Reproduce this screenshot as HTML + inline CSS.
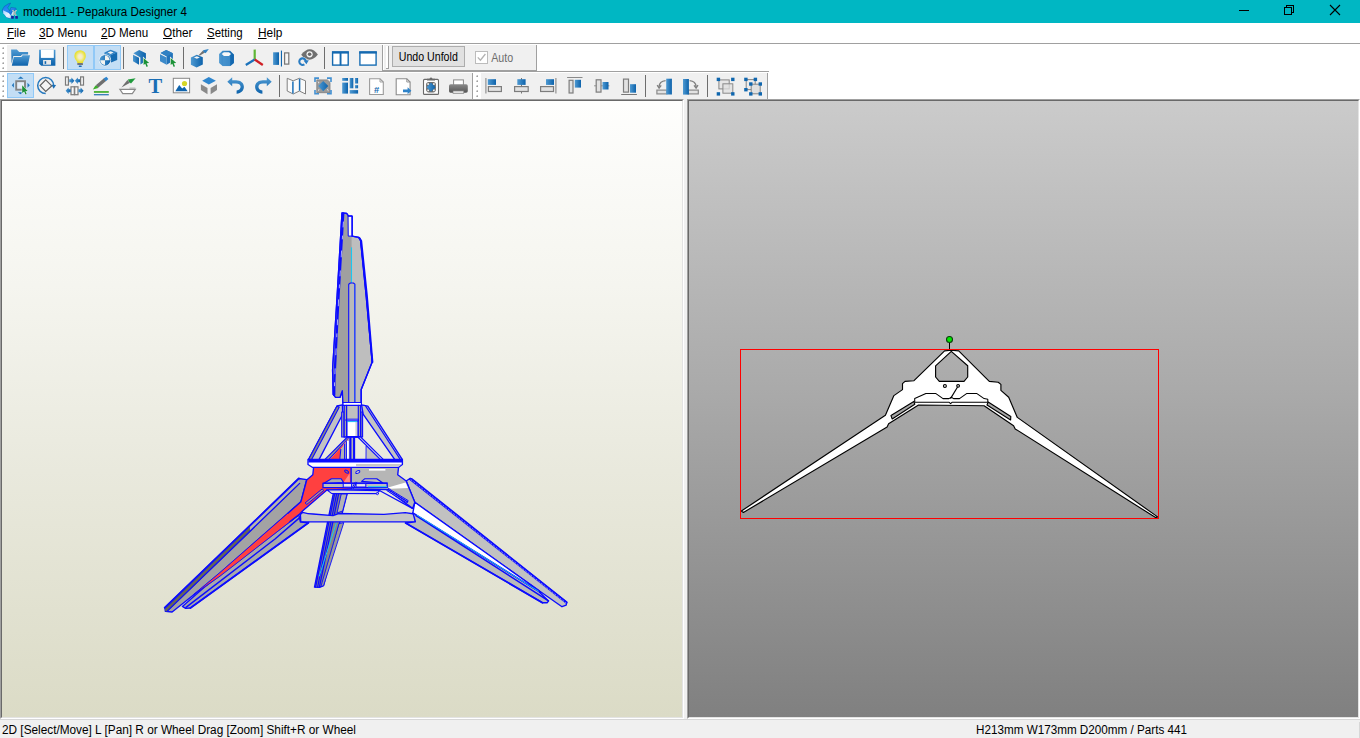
<!DOCTYPE html>
<html lang="en">
<head>
<meta charset="utf-8">
<title>model11 - Pepakura Designer 4</title>
<style>
*{box-sizing:border-box;margin:0;padding:0}
html,body{width:1360px;height:738px;overflow:hidden;background:#f0f0f0}
body{position:relative;font-family:"Liberation Sans",sans-serif;font-size:12px;color:#000}
.abs{position:absolute}
#title{left:0;top:0;width:1360px;height:23px;background:#00b7c3}
#title .t{position:absolute;left:23px;top:4px;font-size:12.3px;line-height:16px;white-space:nowrap;transform:scaleX(.935);transform-origin:0 50%}
#menu{left:0;top:23px;width:1360px;height:20px;background:#fff}
#menu span{position:absolute;top:2px;line-height:16px;font-size:12.3px;white-space:nowrap;transform:scaleX(.935);transform-origin:0 50%}
#menu u{text-decoration:underline;text-underline-offset:1px}
#mline1{left:0;top:43px;width:1360px;height:1px;background:#a0a0a0}
#mline2{left:0;top:44px;width:1360px;height:1px;background:#fff}
#tbarea{left:0;top:45px;width:1360px;height:54px;background:#fff}
.tb{position:absolute;background:#f0f0f0}
.sep{position:absolute;width:1px;background:#6b6b6b}
.sel{position:absolute;background:#c2dcf3;border:1px solid #90c8f6}
.grip{position:absolute;width:7px;background:#fff}
.grip i{position:absolute;left:3px;width:2px;height:2px;background:#b4b4b4}
#status{left:0;top:719px;width:1360px;height:19px;background:#f0f0f0;border-top:1px solid #d7d7d7}
#status span{position:absolute;top:2px;line-height:16px;font-size:12.3px;white-space:nowrap;transform:scaleX(.935);transform-origin:0 50%}
.pane{position:absolute;border-style:solid;border-width:1px;border-color:#a0a0a0 #fff #fff #a0a0a0}
.pane>.in{position:absolute;left:0;top:0;right:0;bottom:0;border-style:solid;border-width:1px;border-color:#696969 #e3e3e3 #e3e3e3 #696969;overflow:hidden}
#p3d .in{background:linear-gradient(#fefefd 0%,#f5f5ef 30%,#e9e9dd 60%,#dbdbc6 100%)}
#p2d .in{background:linear-gradient(#cbcbcb 0%,#a9a9a9 48%,#808080 100%)}
svg{position:absolute;left:0;top:0;overflow:visible}
</style>
</head>
<body>
<div id="title" class="abs"><span class="t" style="transform:scaleX(.9495)">model11 - Pepakura Designer 4</span>
<svg width="1360" height="23" viewBox="0 0 1360 23">
<defs><linearGradient id="aig" x1="0" y1="0" x2="0.4" y2="1"><stop offset="0" stop-color="#0a78f0"/><stop offset="0.5" stop-color="#2a8cf0"/><stop offset="1" stop-color="#0d5fd0"/></linearGradient>
<linearGradient id="aig2" x1="0" y1="0" x2="1" y2="1"><stop offset="0" stop-color="#9fd0ff"/><stop offset="0.6" stop-color="#e8f4ff"/><stop offset="1" stop-color="#bcd8f4"/></linearGradient></defs>
<path d="M10.7 3.1 L8.1 3.9 L4.2 6.5 L2.2 10.1 L3.3 13.2 L6.5 17.2 L10.7 18.7 L11.1 15.6 L12.4 10.9 L16.3 9.8 L15.9 8.1 L10.9 7.4 L9.8 10.9 L7.6 7.8 Z" fill="url(#aig)" stroke="#0a5ab0" stroke-width="0.5"/>
<path d="M3 10.2 L8.8 13 L10.9 15.4 L10.7 18.6 L6.5 17.2 L3.3 13.2 Z" fill="url(#aig2)"/>
<path d="M11 15.2 L12.6 11.4 L14 12.6 L12.6 15.6 Z" fill="#cfe3f6"/>
<path d="M12.6 10 L16.2 15.6 M16.4 10 L12.8 15.6" stroke="#d8d8d8" stroke-width="1.3"/>
<path d="M13.2 10.6 L15.8 15 M15.8 10.6 L13.4 15" stroke="#8a8a8a" stroke-width="0.5"/>
<rect x="11.2" y="15.9" width="2.6" height="2.8" rx="0.5" fill="#1a1c9c"/><rect x="15.3" y="15.9" width="2.6" height="2.8" rx="0.5" fill="#1a1c9c"/>
<g stroke="#000" stroke-width="1" fill="none" shape-rendering="crispEdges">
<path d="M1239 10.5 H1249"/>
<path d="M1284.5 7.5 H1291.5 V14.5 H1284.5 Z"/><path d="M1286.5 7.5 V5.5 H1293.5 V12.5 H1291.5"/>
</g>
<path d="M1330 5 L1340 15 M1340 5 L1330 15" stroke="#000" stroke-width="1.1" fill="none"/>
</svg></div>
<div id="menu" class="abs">
<span style="left:7px"><u>F</u>ile</span>
<span style="left:39px;transform:scaleX(0.962)"><u>3</u>D Menu</span>
<span style="left:101px;transform:scaleX(0.946)"><u>2</u>D Menu</span>
<span style="left:163px;transform:scaleX(0.955)"><u>O</u>ther</span>
<span style="left:207px;transform:scaleX(0.93)"><u>S</u>etting</span>
<span style="left:258px;transform:scaleX(0.964)"><u>H</u>elp</span>
</div>
<div id="mline1" class="abs"></div>
<div id="mline2" class="abs"></div>
<!--TB-START-->
<svg id="tbsvg" width="1360" height="100" viewBox="0 0 1360 100" shape-rendering="auto">
<defs>
<linearGradient id="bv" x1="0" y1="0" x2="0" y2="1"><stop offset="0" stop-color="#509bd3"/><stop offset="1" stop-color="#0c62ab"/></linearGradient>
<linearGradient id="bh" x1="0" y1="0" x2="1" y2="0"><stop offset="0" stop-color="#4f9ad2"/><stop offset="1" stop-color="#0c62ab"/></linearGradient>
<linearGradient id="gv" x1="0" y1="0" x2="0" y2="1"><stop offset="0" stop-color="#8a8a8a"/><stop offset="1" stop-color="#555"/></linearGradient>
<radialGradient id="bulb" cx="0.5" cy="0.5" r="0.5"><stop offset="0" stop-color="#f6ecd8"/><stop offset="0.35" stop-color="#f4ecc0"/><stop offset="0.8" stop-color="#ebe44a"/><stop offset="1" stop-color="#e6de2c"/></radialGradient>
</defs>
<!-- toolbar backgrounds -->
<rect x="0" y="45" width="1360" height="54" fill="#fff"/>
<rect x="7" y="45" width="375" height="26" fill="#f0f0f0"/>
<rect x="384" y="45" width="152" height="26" fill="#f0f0f0"/>
<rect x="0" y="71" width="769" height="1" fill="#a0a0a0"/>
<rect x="7" y="73" width="465" height="26" fill="#f0f0f0"/>
<rect x="481" y="73" width="286" height="26" fill="#f0f0f0"/>
<!-- toolbar end edges -->
<rect x="382" y="45" width="1" height="26" fill="#a0a0a0"/>
<rect x="536" y="45" width="1" height="26" fill="#a0a0a0"/>
<rect x="383" y="70" width="154" height="1" fill="#a0a0a0"/>
<rect x="472" y="73" width="1" height="26" fill="#a0a0a0"/>
<rect x="767" y="73" width="1" height="26" fill="#a0a0a0"/>
<!-- grips -->
<g fill="#c6c6c6">
<rect x="2" y="47" width="2" height="2" fill="#c2c2c2"/><rect x="2" y="47" width="1" height="1" fill="#e6e6e6"/><rect x="3" y="48" width="1" height="1" fill="#a0a0a0"/><rect x="2" y="52" width="2" height="2" fill="#c2c2c2"/><rect x="2" y="52" width="1" height="1" fill="#e6e6e6"/><rect x="3" y="53" width="1" height="1" fill="#a0a0a0"/><rect x="2" y="57" width="2" height="2" fill="#c2c2c2"/><rect x="2" y="57" width="1" height="1" fill="#e6e6e6"/><rect x="3" y="58" width="1" height="1" fill="#a0a0a0"/><rect x="2" y="62" width="2" height="2" fill="#c2c2c2"/><rect x="2" y="62" width="1" height="1" fill="#e6e6e6"/><rect x="3" y="63" width="1" height="1" fill="#a0a0a0"/><rect x="2" y="67" width="2" height="2" fill="#c2c2c2"/><rect x="2" y="67" width="1" height="1" fill="#e6e6e6"/><rect x="3" y="68" width="1" height="1" fill="#a0a0a0"/>
<rect x="2" y="75" width="2" height="2" fill="#c2c2c2"/><rect x="2" y="75" width="1" height="1" fill="#e6e6e6"/><rect x="3" y="76" width="1" height="1" fill="#a0a0a0"/><rect x="2" y="80" width="2" height="2" fill="#c2c2c2"/><rect x="2" y="80" width="1" height="1" fill="#e6e6e6"/><rect x="3" y="81" width="1" height="1" fill="#a0a0a0"/><rect x="2" y="85" width="2" height="2" fill="#c2c2c2"/><rect x="2" y="85" width="1" height="1" fill="#e6e6e6"/><rect x="3" y="86" width="1" height="1" fill="#a0a0a0"/><rect x="2" y="90" width="2" height="2" fill="#c2c2c2"/><rect x="2" y="90" width="1" height="1" fill="#e6e6e6"/><rect x="3" y="91" width="1" height="1" fill="#a0a0a0"/><rect x="2" y="95" width="2" height="2" fill="#c2c2c2"/><rect x="2" y="95" width="1" height="1" fill="#e6e6e6"/><rect x="3" y="96" width="1" height="1" fill="#a0a0a0"/>
<rect x="476" y="75" width="2" height="2" fill="#c2c2c2"/><rect x="476" y="75" width="1" height="1" fill="#e6e6e6"/><rect x="477" y="76" width="1" height="1" fill="#a0a0a0"/><rect x="476" y="80" width="2" height="2" fill="#c2c2c2"/><rect x="476" y="80" width="1" height="1" fill="#e6e6e6"/><rect x="477" y="81" width="1" height="1" fill="#a0a0a0"/><rect x="476" y="85" width="2" height="2" fill="#c2c2c2"/><rect x="476" y="85" width="1" height="1" fill="#e6e6e6"/><rect x="477" y="86" width="1" height="1" fill="#a0a0a0"/><rect x="476" y="90" width="2" height="2" fill="#c2c2c2"/><rect x="476" y="90" width="1" height="1" fill="#e6e6e6"/><rect x="477" y="91" width="1" height="1" fill="#a0a0a0"/><rect x="476" y="95" width="2" height="2" fill="#c2c2c2"/><rect x="476" y="95" width="1" height="1" fill="#e6e6e6"/><rect x="477" y="96" width="1" height="1" fill="#a0a0a0"/>
</g>
<!-- vertical bar grip of Undo-Unfold toolbar -->
<rect x="386" y="46" width="2" height="23" fill="#fff"/><rect x="388" y="46" width="1" height="23" fill="#a0a0a0"/><rect x="386" y="68" width="3" height="1" fill="#a0a0a0"/>
<!-- selected button boxes -->
<g fill="#c3def5" stroke="#91c9f7" stroke-width="1">
<rect x="67.5" y="45.5" width="26" height="24"/><rect x="94.5" y="45.5" width="26" height="24"/><rect x="7.5" y="73.5" width="26" height="24"/>
</g>
<!-- separators -->
<g fill="#6d6d6d">
<rect x="63" y="47" width="1" height="22"/><rect x="123" y="47" width="1" height="22"/><rect x="183" y="47" width="1" height="22"/><rect x="324" y="47" width="1" height="22"/>
<rect x="279" y="75" width="1" height="22"/><rect x="645" y="75" width="1" height="22"/><rect x="707" y="75" width="1" height="22"/>
</g>
<!-- ===== ROW 1 ICONS ===== -->
<!-- open folder -->
<path d="M11.1 49.6 H16.8 L19.2 51.9 H28.1 V54.4 H22.1 L20.8 56.1 H13.3 L11.6 63.5 Z" fill="url(#bv)"/>
<path d="M13.8 56.9 H21.3 L22.6 55.2 H30 L27.8 65.8 H11.8 Z" fill="url(#bv)"/>
<!-- save -->
<path d="M39.1 49.7 H55.4 V65.8 H41.2 L39.1 63.8 Z" fill="url(#bv)"/>
<rect x="40.9" y="49.7" width="12.9" height="8.2" fill="#fff"/>
<rect x="43.1" y="60" width="7.9" height="4.7" fill="#e9e9e9"/>
<rect x="44.6" y="61.2" width="1.6" height="2.7" fill="#0f66ae"/>
<!-- bulb -->
<path d="M77.3 63 C77.3 60.5 74.4 59.6 74.4 55.9 A5.7 5.7 0 0 1 85.8 55.9 C85.8 59.6 83 60.5 83 63 Z" fill="url(#bulb)"/>
<rect x="77.3" y="63" width="5.7" height="2.1" rx="0.6" fill="#777"/>
<rect x="78.8" y="65.6" width="2.9" height="1.4" rx="0.5" fill="#1a6db5"/>
<!-- cube + sphere -->
<path d="M104.4 52.6 L110.6 49.7 L117.2 52.2 L111 55 Z" fill="#2d7fc2"/>
<path d="M117.2 52.2 V59.9 L111 62.5 V55 Z" fill="#146ab1"/>
<path d="M104.4 52.6 L111 55 V62.5 L104.4 59.9 Z" fill="#3c8bc9"/>
<path d="M107.5 52.6 L110.6 51.3 L113.6 52.4 L110.6 53.9 Z" fill="#f2f2f2"/>
<circle cx="105" cy="60.3" r="6.1" fill="#eef3f8"/>
<circle cx="105" cy="60.3" r="5.4" fill="url(#bh)"/>
<path d="M105 60.3 V55.6 A4.7 4.7 0 0 1 109.7 60.3 Z" fill="#f4f4f0"/>
<path d="M105 60.3 V65 A4.7 4.7 0 0 1 100.3 60.3 Z" fill="#f4f4f0"/>
<!-- cube cursor 1 -->
<g>
<path d="M133.4 53.3 L139.2 50 L145.9 53.3 V61 L140.4 64.4 V57.4 Z" fill="url(#bh)"/>
<path d="M133 54.7 L139 57.8 V64.7 L133 61.2 Z" fill="url(#bh)"/>
<path d="M143.6 58 V64.9 L145.2 63.7 L146.6 66.9 L147.9 66.3 L146.6 63.3 L149.2 63.1 Z" fill="#1c9237" stroke="#f4f4f4" stroke-width="1.3" paint-order="stroke"/>
</g>
<!-- cube cursor 2 -->
<g>
<path d="M160.6 52.9 L166.2 50 L172.9 53.3 V61 L166.6 64.7 V56.2 Z" fill="#2273ba"/>
<path d="M160.6 52.9 L166.2 50 L172.9 53.3 L166.6 56.2 Z" fill="#2f80c3"/>
<path d="M160 54.2 L166.6 57.5 V64.7 L160 61.2 Z" fill="#3c8aca"/>
<path d="M170.7 58 V64.9 L172.3 63.7 L173.7 66.9 L175 66.3 L173.7 63.3 L176.3 63.1 Z" fill="#1c9237" stroke="#f4f4f4" stroke-width="1.3" paint-order="stroke"/>
</g>
<!-- cube + brush -->
<path d="M190.9 57.4 L196.8 54.8 L202.8 57.2 V64.5 L196.6 67.6 L190.9 64.7 Z" fill="url(#bh)"/>
<path d="M193.9 57.4 L196.8 56.3 L199.9 57.4 L196.8 58.8 Z" fill="#f4f4f4"/>
<path d="M198.6 55.2 L203 50.6 L205 52.6 L200 55.6 Z" fill="#727272"/>
<path d="M203 50.2 L208.8 48.9 L205.6 53.2 Q203.4 53 203 50.2 Z" fill="#2f80c3"/>
<!-- hex cylinder -->
<path d="M219.1 54.1 L222.6 50.8 H230.1 L233.9 54.4 V63 L230.3 66.1 H222.6 L219.1 63 Z" fill="url(#bh)"/>
<path d="M222.6 55.6 H230.3 V66.1 H222.6 Z" fill="#4a95d0" opacity="0.7"/><path d="M230.3 55.6 L233.9 54.4 V63 L230.3 66.1 Z" fill="#1368b0" opacity="0.6"/>
<path d="M221.7 54.1 L223.9 52.2 H229 L231 54.1 L229 55.9 H223.9 Z" fill="#f8f8f8"/>
<!-- axes -->
<path d="M254.7 49.6 V59.5" stroke="#5fb635" stroke-width="2.2"/>
<path d="M254.7 59.5 L245.8 65" stroke="#1b72bb" stroke-width="2.2"/>
<path d="M254.7 59.5 L262.8 65" stroke="#cf1f25" stroke-width="2.2"/>
<!-- split -->
<rect x="273.1" y="52.3" width="5.9" height="12.6" fill="url(#bh)"/>
<rect x="280.9" y="50.6" width="1.1" height="15.9" fill="#1167af"/>
<rect x="284.6" y="52.9" width="4.2" height="11.2" fill="#f6f6f6" stroke="#767676" stroke-width="1.2"/>
<!-- eye + rotate -->
<path d="M301.2 54.8 Q305.5 49.3 309.8 49.3 Q314 49.3 317.9 54.6 Q314 59.7 309.5 59.7 Q305 59.7 301.2 54.8 Z" fill="#707070"/>
<circle cx="309.6" cy="54.3" r="3.1" fill="#f4f4f4"/>
<circle cx="309.6" cy="54.3" r="1.8" fill="#6a6a6a"/>
<circle cx="302.6" cy="61.6" r="4.7" fill="#f0f0f0"/>
<path d="M305.9 61.6 A3.3 3.3 0 1 0 304.4 64.4" fill="none" stroke="#2a7cc2" stroke-width="2.1"/>
<path d="M303.6 60.6 L308.8 60.2 L306.4 64.2 Z" fill="#2a7cc2"/>
<!-- two-pane -->
<rect x="332.6" y="52.1" width="15.6" height="13" fill="#fff" stroke="#1469b0" stroke-width="1.4"/>
<rect x="332" y="51.3" width="16.8" height="2.3" fill="#1469b0"/>
<rect x="339.6" y="52" width="1.9" height="13.4" fill="#1469b0"/>
<!-- one-pane -->
<rect x="359.9" y="52.1" width="16.2" height="13" fill="#fff" stroke="#1a6eb4" stroke-width="1.4"/>
<rect x="359.2" y="51.3" width="17.6" height="2.3" fill="#1469b0"/>
<!-- ===== ROW 2 ICONS ===== -->
<!-- select/move -->
<g fill="#1f74bb">
<path d="M20.7 76.6 L23.6 78.7 H17.8 Z"/><path d="M11.8 85.2 L13.9 82.8 V87.8 Z"/><path d="M29.8 85.2 L27.5 82.8 V87.8 Z"/><path d="M20.4 94.3 L17.8 92.2 H23 Z"/>
</g>
<rect x="16.2" y="81.2" width="8.8" height="8.5" fill="#e4eef8" stroke="#858585" stroke-width="1.9"/>
<path d="M22.2 85.2 V93 L24.2 91.6 L25.5 94.6 L26.7 94 L25.4 91.2 L27.7 90.9 Z" fill="#1c9237" stroke="#f0f4f0" stroke-width="0.9" paint-order="stroke"/>
<!-- rotate -->
<path d="M45.7 93.6 A8 8 0 1 1 53.7 85.6" fill="none" stroke="#2579bf" stroke-width="1.5"/>
<path d="M51.5 84.8 L56.1 85.1 L53.6 88.7 Z" fill="#1a6eb5"/>
<path d="M45.7 79.9 L51.7 85.9 L45.7 91.5 L40.1 85.6 Z" fill="#f4f4f4" stroke="#5f5f5f" stroke-width="1.2"/>
<!-- join/disjoin -->
<g fill="#f8f8f8" stroke="#7b7b7b" stroke-width="1.2">
<rect x="65.5" y="76.9" width="2.9" height="8.2"/><rect x="80.6" y="76.9" width="2.9" height="8.2"/>
<rect x="71" y="86.8" width="3.3" height="7.9"/><rect x="74.7" y="86.8" width="3.3" height="7.9"/>
</g>
<g fill="url(#bh)">
<path d="M69.2 79.3 H71.4 V77.6 L74.4 80.8 L71.4 84 V82.3 H69.2 Z"/>
<path d="M80 79.3 H77.8 V77.6 L74.8 80.8 L77.8 84 V82.3 H80 Z"/>
<path d="M70.6 89.3 H68.6 V87.6 L65.6 90.8 L68.6 94 V92.3 H70.6 Z"/>
<path d="M78.4 89.3 H80.6 V87.6 L83.6 90.8 L80.6 94 V92.3 H78.4 Z"/>
</g>
<!-- pen with lines -->
<path d="M95.8 85.2 L104 78.2 L106.3 80.8 L98.1 87.8 Z" fill="#6f6f6f"/>
<path d="M103.6 78.6 L106.4 76.7 L108.4 79 L105.8 81.3 Z" fill="#2e85cf"/>
<path d="M92.9 89.6 L95.4 85.4 Q97.6 85.6 98.3 87.9 Z" fill="#3cae2a"/>
<rect x="93.9" y="91.1" width="14.9" height="1.7" fill="#3fae2a"/>
<rect x="93.9" y="94.2" width="14.9" height="1.1" fill="#0f66ae"/>
<!-- knife + bowl -->
<path d="M127.8 79.6 L135.6 78.2 L131 83.4 Q128.8 82.6 127.8 79.6 Z" fill="#1f9a3c"/>
<path d="M121.4 87.4 L127.4 80 L130 82.8 Z" fill="#6f6f6f"/>
<path d="M119.9 89.3 H135.3 L132.3 93.6 H122.8 Z" fill="#fff" stroke="#8a8a8a" stroke-width="1.2"/>
<path d="M129.5 88.1 H135.4" stroke="#9a9a9a" stroke-width="0.8"/>
<!-- T -->
<text x="155.4" y="92.6" font-family="Liberation Serif,serif" font-weight="bold" font-size="20.5" fill="#1a6eb5" text-anchor="middle">T</text>
<!-- image -->
<rect x="173.3" y="78.3" width="16.3" height="14.5" fill="#fff" stroke="#878787" stroke-width="1"/>
<circle cx="184.5" cy="83.5" r="2.6" fill="#d6d627"/>
<path d="M175.3 91.2 L179.2 85 L182.2 88.4 L184.4 86.8 L187.7 91.2 Z" fill="#1064ad"/>
<!-- cube -->
<path d="M202.2 80.8 L208.8 77.1 L215.9 80.8 L208.8 84.4 Z" fill="#2f86ce"/>
<path d="M200.9 84.2 L207.5 87.9 V94.3 L200.9 90.1 Z" fill="#8a8a8a"/>
<path d="M210.6 87.9 L217 84.2 V90.1 L210.6 94.3 Z" fill="#8a8a8a"/>
<!-- undo -->
<path id="undo" d="M227.3 81.7 L232.2 77.2 V80.2 H236 C240.8 80.2 243.9 83 243.9 86.8 C243.9 90.4 241.2 93.2 236.6 93.8 V90.6 C239.2 90 240.6 88.8 240.6 86.8 C240.6 84.6 238.8 83.4 236 83.4 H232.2 V86.2 Z" fill="url(#bv)"/>
<!-- redo -->
<path d="M271.7 81.7 L266.8 77.2 V80.2 H263 C258.2 80.2 255.1 83 255.1 86.8 C255.1 90.4 257.8 93.2 262.4 93.8 V90.6 C259.8 90 258.4 88.8 258.4 86.8 C258.4 84.6 260.2 83.4 263 83.4 H266.8 V86.2 Z" fill="url(#bv)"/>
<!-- map -->
<path d="M287.2 78.3 L293.2 80.8 L299.4 78.3 L305.5 80.8 V94 L299.4 91 L293.2 94 L287.2 91 Z" fill="#fafafa" stroke="#808080" stroke-width="1"/>
<path d="M292.9 81.4 V93.4 M299.6 78.8 V90.8" stroke="#1b70b8" stroke-width="1.5"/>
<!-- zoom fit -->
<path d="M316.8 79.9 H327.4 L330 82.4 V92.7 H316.8 Z" fill="#9a9a9a" stroke="#7c7c7c" stroke-width="0.8"/>
<path d="M323.2 81 L328.3 86.1 L323.2 91.3 L318.1 86.1 Z" fill="url(#bh)"/>
<g fill="#f4f4f4"><path d="M317.6 81 L319.4 82.8 L318.6 83.6 Z"/><path d="M317.6 91.6 L319.6 89.8 L318.8 89 Z"/><path d="M328.8 91.6 L327 89.8 L327.8 89 Z"/></g>
<g fill="none" stroke="#4290d2" stroke-width="1.6">
<path d="M315 82 V78.1 H319"/><path d="M327 78.1 H331 V82"/><path d="M315 90 V93.8 H319"/><path d="M327 93.8 H331 V90"/>
</g>
<!-- layout -->
<g fill="url(#bh)">
<rect x="342.2" y="78" width="5.8" height="2.8"/><rect x="342.2" y="82.6" width="5.8" height="11"/>
<rect x="349.7" y="78" width="3.6" height="10.3"/><rect x="355" y="78" width="3.1" height="5.5"/>
<rect x="355" y="85.2" width="3.1" height="3.1"/><rect x="349.7" y="90.1" width="8.4" height="3.5"/>
</g>
<!-- page # -->
<path d="M369.6 78.8 H380 L383.3 82 V94.5 H369.6 Z" fill="#fff" stroke="#9a9a9a" stroke-width="1.1"/>
<path d="M380 78.8 V82 H383.3" fill="none" stroke="#9a9a9a" stroke-width="0.9"/>
<text x="376.5" y="92.8" font-family="Liberation Sans,sans-serif" font-weight="bold" font-size="9.4" fill="#1368af" text-anchor="middle">#</text>
<!-- page arrow -->
<path d="M396.2 78.8 H406.8 L410.1 82 V94.8 H396.2 Z" fill="#fff" stroke="#8c8c8c" stroke-width="1.1"/>
<path d="M406.8 78.8 V82 H410.1" fill="none" stroke="#8c8c8c" stroke-width="0.9"/>
<path d="M403 89.4 H407.6 V87.3 L411.4 90.8 L407.6 94.3 V92.2 H403 Z" fill="#2f83c9"/>
<!-- clipboard -->
<rect x="423.5" y="79.4" width="15" height="15" rx="1" fill="#fdfdfd" stroke="#6a6a6a" stroke-width="1.1"/>
<path d="M427 80.6 V78.7 H429.4 Q431 76.5 432.6 78.7 H435 V80.6 Z" fill="#6a6a6a"/>
<rect x="426.1" y="82" width="9.8" height="10.4" rx="2.8" fill="#6c6c6c"/>
<g fill="#f2f2f2"><rect x="427.3" y="83.2" width="1.7" height="1.7"/><rect x="433" y="83.2" width="1.7" height="1.7"/><rect x="427.3" y="89.5" width="1.7" height="1.7"/><rect x="433" y="89.5" width="1.7" height="1.7"/></g>
<path d="M431 82.6 L435.5 87.2 L431 91.8 L426.5 87.2 Z" fill="url(#bh)"/>
<!-- printer -->
<rect x="453.6" y="79.9" width="9.8" height="6.4" fill="#fff" stroke="#8a8a8a" stroke-width="1"/>
<path d="M450.6 84.2 H466.1 Q467.8 84.2 467.8 86 V91 Q467.8 92.8 466.1 92.8 H450.6 Q449 92.8 449 91 V86 Q449 84.2 450.6 84.2 Z" fill="url(#gv)"/>
<rect x="453" y="90.9" width="10.8" height="2.6" fill="#e2e2e2" stroke="#777" stroke-width="0.6"/>
<!-- ===== ALIGN TOOLBAR ===== -->
<g>
<rect x="485" y="78" width="1.7" height="15.5" fill="#adadad"/>
<rect x="487.8" y="79.2" width="8.2" height="5.7" fill="url(#bh)"/>
<rect x="488.4" y="86.6" width="13" height="4.9" fill="#e2e2e2" stroke="#7d7d7d" stroke-width="1.2"/>
<rect x="521" y="78" width="1" height="15.5" fill="#777"/>
<rect x="517.3" y="79.2" width="8.3" height="5.7" fill="url(#bh)"/>
<rect x="514.6" y="86.6" width="13.6" height="4.9" fill="#e2e2e2" stroke="#7d7d7d" stroke-width="1.2"/>
<rect x="555" y="78" width="1.7" height="15.5" fill="#adadad"/>
<rect x="546" y="79.2" width="8" height="5.7" fill="url(#bh)"/>
<rect x="540.6" y="86.6" width="12.9" height="4.9" fill="#e2e2e2" stroke="#7d7d7d" stroke-width="1.2"/>
<rect x="567.1" y="77" width="15.4" height="1" fill="#8a8a8a"/>
<rect x="569.1" y="80.3" width="3.9" height="12.7" fill="#e2e2e2" stroke="#7d7d7d" stroke-width="1.2"/>
<rect x="574.8" y="79.8" width="6.2" height="7.8" fill="url(#bh)"/>
<rect x="594" y="85.3" width="15.4" height="1" fill="#9a9a9a"/>
<rect x="596.2" y="79.8" width="4.8" height="12.3" fill="#e2e2e2" stroke="#7d7d7d" stroke-width="1.2"/>
<rect x="602.5" y="82" width="6" height="7.5" fill="url(#bh)"/>
<rect x="621.2" y="94" width="15.7" height="1" fill="#777"/>
<rect x="623.5" y="79.1" width="5" height="13" fill="#e2e2e2" stroke="#7d7d7d" stroke-width="1.2"/>
<rect x="630" y="84.2" width="6" height="8.5" fill="url(#bh)"/>
<!-- rotate left -->
<rect x="656.9" y="90.1" width="10" height="3.8" fill="#e2e2e2" stroke="#8a8a8a" stroke-width="1.2"/>
<rect x="666.2" y="78.7" width="5.7" height="15.8" fill="url(#bh)"/>
<path d="M665.6 80.6 Q659.4 81.2 659.1 86.6" fill="none" stroke="#808080" stroke-width="1.4"/>
<path d="M657.2 85.2 L659.1 88 L661.2 85.4" fill="none" stroke="#808080" stroke-width="1.4"/>
<!-- rotate right -->
<rect x="688.3" y="90.1" width="10" height="3.8" fill="#e2e2e2" stroke="#8a8a8a" stroke-width="1.2"/>
<rect x="683" y="79" width="5.9" height="15.6" fill="url(#bh)"/>
<path d="M689.6 80.6 Q695.8 81.2 696.1 86.6" fill="none" stroke="#808080" stroke-width="1.4"/>
<path d="M694 85.4 L696.1 88 L698 85.2" fill="none" stroke="#808080" stroke-width="1.4"/>
<!-- group -->
<rect x="718.9" y="79.9" width="10.3" height="9" fill="#e6e6e6" stroke="#858585" stroke-width="1"/>
<rect x="722.9" y="83.8" width="9.9" height="9.4" fill="#e0e0e0" fill-opacity="0.75" stroke="#8a8a8a" stroke-width="1"/>
<g fill="#0f66ae"><rect x="716.7" y="77.7" width="3.4" height="3.4"/><rect x="731.1" y="77.7" width="3.4" height="3.4"/><rect x="716.7" y="92.2" width="3.4" height="3.4"/><rect x="731.1" y="92.2" width="3.4" height="3.4"/></g>
<!-- ungroup -->
<rect x="746.2" y="79.6" width="9" height="10" fill="#ececec" stroke="#858585" stroke-width="1"/>
<rect x="751.2" y="84.2" width="9" height="9.6" fill="#e0e0e0" stroke="#858585" stroke-width="1"/>
<g fill="#0f66ae"><rect x="744.2" y="77.7" width="3.4" height="3.4"/><rect x="753.7" y="77.7" width="3.4" height="3.4"/><rect x="744.2" y="88" width="3.4" height="3.4"/><rect x="749.1" y="82.3" width="3.4" height="3.4"/><rect x="758.6" y="82.3" width="3.4" height="3.4"/><rect x="749.1" y="92.2" width="3.4" height="3.4"/><rect x="758.6" y="92.2" width="3.4" height="3.4"/></g>
</g>
<!-- Undo Unfold button, Auto checkbox -->
<rect x="392.5" y="46.5" width="72" height="20" fill="#e1e1e1" stroke="#adadad" stroke-width="1"/>
<text x="428.3" y="60.8" font-family="Liberation Sans,sans-serif" font-size="12.2" fill="#000" text-anchor="middle" textLength="59" lengthAdjust="spacingAndGlyphs">Undo Unfold</text>
<rect x="475.5" y="51.5" width="12" height="12" fill="#fff" stroke="#bcbcbc" stroke-width="1"/>
<path d="M477.8 57.4 L480.4 60.2 L485.4 54" fill="none" stroke="#b2b2b2" stroke-width="1.3"/>
<text x="491.2" y="62" font-family="Liberation Sans,sans-serif" font-size="12.2" fill="#6d6d6d" textLength="22" lengthAdjust="spacingAndGlyphs">Auto</text>
</svg>
<!--TB-END-->
<div id="p3d" class="pane" style="left:0;top:99px;width:684px;height:620px"><div class="in"></div></div>
<div id="p2d" class="pane" style="left:687px;top:99px;width:673px;height:620px"><div class="in"></div></div>
<!--P3D-START-->
<svg id="svg3d" width="1360" height="738" viewBox="0 0 1360 738">
<g stroke="#0c0cff" stroke-width="1.35" stroke-linejoin="round" stroke-linecap="round" fill="none">
<!-- back leg -->
<path d="M333.3 493.6 H347.2 L323.6 585.6 L319.6 587.4 L314.5 587.2 Z" fill="#868686"/>
<path d="M341.6 494 L347 494 L342.6 511 L337.4 512.8 Z" fill="#b4b4b4" stroke-width="0.9"/>
<path d="M339.4 523.5 L343.8 522.6 L323.6 585.6 L321.2 586.6 Z" fill="#9a9a9a" stroke-width="0.9"/>
<path d="M334.6 494 L315.6 587 M336.6 494 L317.6 587.2 M338.6 494 L319.4 587" stroke-width="1.3"/>
<path d="M336.3 523 L319.3 576" stroke="#19c8f0" stroke-width="1"/>
<!-- lower crossbar -->
<path d="M300.4 514.4 L302.6 512.4 Q308 513.9 313 514 L333 515.6 L338.6 513.5 L384 514.3 L405.2 512.7 L414.4 514 L415.4 521.8 L300.8 521.8 Z" fill="#c6c6c6"/>
<!-- LEFT LEG : lower piece -->
<path d="M298.8 514.6 L204.3 587.2 L182.4 606.4 L185.6 608.4 L190.4 608 L308.5 522.8 L300.4 522 Z" fill="#a9a9a9"/>
<path d="M300 517.4 L275 539 L186 607.4" stroke-width="1.5"/><path d="M190.4 608 L308.5 522.8" stroke-width="1.8"/>
<!-- LEFT LEG : upper face -->
<path d="M298.8 478.5 L306.7 479.6 L300.9 501.8 L220 573.3 L196 593 L172.1 612 L165.4 611.3 L164.8 607.7 Z" fill="#a3a3a3"/>
<path d="M297.6 485 L270 511.6 L250 531 L166.8 611" stroke-width="1.1"/>
<path d="M250 526.6 L164.8 607.7 L165.4 611.3 L167.4 611.6 L250 531.4 Z" fill="#666657" stroke="none"/>
<path d="M298.8 478.5 L250 526.6 L250 531.4 L299.6 483.4 Z" fill="#b9b9a8" stroke="none"/>
<path d="M298.8 478.5 L164.8 607.7" stroke-width="1.9"/><path d="M299.6 483.4 L167 611.4" stroke-width="1.3"/>
<!-- red stripe on left leg -->

<!-- RIGHT LEG : lower piece -->
<path d="M412.9 512.7 L538.8 591.5 L548.5 600.9 L547.3 602.7 L542.4 602.7 L405.6 523 L415.4 521.8 Z" fill="#b9b9b9"/>
<path d="M416 515.7 L548.5 600.9" stroke-width="1.5"/><path d="M405.6 523 L542.4 602.7" stroke-width="1.8"/>
<!-- RIGHT LEG : upper face -->
<path d="M406.2 481 L409.9 478.5 L412.2 479 L566.8 602.1 L566.2 605.1 L562 606.7 L538.8 590.5 L414.8 502.3 Z" fill="#c1c1c1"/>
<path d="M410.2 479 L566.4 602.6" stroke-width="2.3"/>
<path d="M411 479.8 L565.8 602.8" stroke="#c8c8f0" stroke-width="0.6" stroke-dasharray="1.2 2.2"/>
<!-- white stripe -->
<path d="M414.8 502.3 L538.8 590.5 L540.5 592.4 L412.9 512.7 Z" fill="#fff"/>
<path d="M417 515.2 L538.4 591.2" stroke="#19c8f0" stroke-width="0.9"/>
<!-- TOP FIN -->
<path d="M342 213 L346.6 213.4 L348.4 216 L352.1 216.2 L352.1 236.1 L358.8 237.3 L360.6 240.4 L366.1 295 L372.2 362 L361.2 389.5 L361.2 402.9 L342.9 402.9 L342.3 390.7 L339.9 397.4 L335.6 397.4 L333.2 394.4 L332.6 370 L337.2 295 Z" fill="#bebebe"/>
<path d="M342 213 L346.6 213.4 L348.4 216 L348.6 236 L351.6 237 L351.6 283.5 L348.6 284 L348.6 402.9 L342.9 402.9 L342.3 390.7 L339.9 397.4 L335.6 397.4 L333.2 394.4 L332.6 370 L337.2 295 Z" fill="#a0a0a0" stroke="none"/>
<path d="M343.2 213.6 L338.6 295 L334.4 380 L334.2 395" stroke-width="2.3"/>
<path d="M343.4 222 L338.8 295 L334.6 380 L334.4 392" stroke="#f4f4f4" stroke-width="0.7" stroke-dasharray="5 9 3 12 6 14"/>
<path d="M348.4 216 H352.1 V236.1 H348.6 Z" fill="#fafafa" stroke-width="1"/>
<path d="M351.5 247.7 V283" stroke="#19c8f0" stroke-width="1.1"/>
<path d="M348.7 284.2 L350.4 283 L353.4 283 L354.8 284.2 V402.9 H348.7 Z" fill="#b9b9b9" stroke-width="1.1"/>
<path d="M354.8 284.2 V402.9" stroke="#2a55ff" stroke-width="0.9"/>
<path d="M359.4 238 L361.2 241 L366.8 295 L372.4 362" stroke-width="2"/>
<path d="M342 213 L346.6 213.4 L348.4 216 L352.1 216.2 L352.1 236.1 L358.8 237.3 L360.6 240.4 L366.1 295 L372.2 362 L361.2 389.5 L361.2 402.9 M342.9 402.9 L342.3 390.7 L339.9 397.4 L335.6 397.4 L333.2 394.4 L332.6 370 L337.2 295 L342 213"/>
<!-- A-FRAME STRUTS -->
<path d="M337 406 L342.4 404.8 L342.7 414.2 L319 459.6 L308.5 459.6 Z" fill="#c2c2c2"/>
<path d="M337 406 L308.5 459.6 L311.6 459.6 L339.2 407.2 Z" fill="#858585" stroke-width="1.1"/>
<path d="M361.6 404.8 L367.8 406.2 L402.4 459.6 L394.8 459.6 L363.1 414.2 Z" fill="#c4c4c4"/>
<path d="M365.8 406.4 L400.2 459.4" stroke-width="1.1"/>
<!-- COLUMN -->
<path d="M341.7 412 H344.2 V437 H341.7 Z M360.6 412 H362.6 V437 H360.6 Z" fill="#a8a8a8" stroke-width="1.1"/>
<path d="M344.1 402.9 H360.7 V437 H344.1 Z" fill="#a2a2a2"/>
<path d="M347.4 405.6 H357.8 V419.4 H347.4 Z" fill="#c0c0c0" stroke="none"/>
<path d="M343 402.5 H361.4 V405.4 H343 Z" fill="#fff" stroke-width="1.2"/>
<path d="M346.4 419.2 H358.4 V421 H346.4 Z" fill="#fff" stroke-width="1"/>
<path d="M346.9 421 H357.8 V436.5 H346.9 Z" fill="#fff" stroke-width="1.1"/>
<path d="M355.4 422 H357.4 V436 H355.4 Z" fill="#d0d0d0" stroke="none"/>
<path d="M347.6 421.6 H357" stroke="#19c8f0" stroke-width="0.9"/>
<path d="M346.6 405.4 V437 M358.3 405.4 V437" stroke-width="1.1"/>
<!-- INNER TRIANGLE -->
<path d="M347.4 437 L349.4 437.4 L328.8 459.7 L324.7 459.7 Z" fill="#9a9a9a" stroke-width="1.1"/>
<path d="M349.6 437.6 L329.6 459.7 L339.8 459.7 L340.8 449.3 Z" fill="#ff4040" stroke="none"/>
<path d="M349.6 437.6 L343 444.6 L345 445.4 Z" fill="#ff8a84" stroke="none"/>
<path d="M340.8 449.3 L349.6 437.6 H355 V459.7 H339.8 Z" fill="#b2b2b2" stroke="none"/>
<path d="M346.8 441 H348.8 V459.7 H346.8 Z" fill="#fff" stroke="none"/>
<path d="M340.8 449.3 L339.8 459.7 M344.6 444 V459.7 M346.4 441.6 V459.7" stroke-width="1"/>
<path d="M350.4 437.6 V459.7 M354.1 437.6 V459.7" stroke-width="2.1"/>
<path d="M347.4 437 H360.7" stroke-width="1.3"/>
<path d="M357.8 437 L360.7 437 L383.5 459.7 L380.6 459.7 Z" fill="#d8d8ea" stroke-width="1.1"/>
<path d="M366.4 446 L380.2 459.7 L366.4 459.7 Z" fill="#c0c0c0" stroke-width="0.9"/>
<!-- HUB -->
<path d="M351 467.2 L398.6 466.8 L397.7 474.8 L406.2 481 L414.8 502.3 L412.6 508.4 L386.6 489.5 L351 489 Z" fill="#b6b6b6"/>
<path d="M300.9 501.8 L220 572.4 L193.6 594.6 L220 576.2 L299 514.8 L303 511 Z" fill="#ff4040" stroke-width="0.9"/>
<path d="M313.6 467.4 L351 467.2 L351 489 L326.6 490.2 L302.5 511 L299 514.6 L290 521.6 L288 513.2 L300.9 501.8 L306.7 480 L312.8 474.7 Z" fill="#ff4040" stroke="none"/>
<path d="M290 521.6 L299 514.6 L302.5 511 L326.6 490.2 L351 489 M288 513.2 L300.9 501.8 L306.7 480 L312.8 474.7 L313.6 467.4"/>
<path d="M349.6 473.4 L343.6 482.2 L350 482.4 Z" fill="#ff8a84" stroke="none"/>
<path d="M322.4 489.2 L323.8 490.4 L306.8 504.4 L305.4 503.2 Z" fill="#b09090" stroke-width="1"/>
<ellipse cx="346.6" cy="471.6" rx="2.2" ry="1.2" transform="rotate(35 346.6 471.6)" fill="#c06060" stroke-width="1"/>
<ellipse cx="357.8" cy="472" rx="2.2" ry="1.2" transform="rotate(-25 357.8 472)" fill="#d0d0d0" stroke-width="1"/>
<path d="M351 467.4 V482" stroke-width="1.2"/>
<path d="M369 469 H385.4 V470.6 H369 Z" fill="#fff" stroke="none"/>
<path d="M388 487.4 L405.5 482.4 L408 488 L391.4 488.8 Z" fill="#fff" stroke="none"/>
<path d="M388.6 488.6 L408.2 500.6 L406.8 503 L387.2 490.8 Z" fill="#d4d4d4" stroke-width="1"/>
<path d="M388.4 489.8 L407.4 501.8" stroke-width="1.6" stroke-dasharray="1 1.2"/>
<path d="M379.9 490.8 L412.4 508.4" stroke-width="1.2"/>
<!-- horizontal bar -->
<path d="M308 459.5 L402.4 459.5 L402.4 464.5 L398.6 467.3 L312.3 467.3 L308 464.5 Z" fill="#fff"/>
<path d="M356 464 H401.6 L399 466.6 H356 Z" fill="#c8c8c8" stroke="none"/>
<path d="M308.4 461 L402.2 461" stroke-width="2.8" stroke-linecap="butt"/>
<!-- plate -->
<path d="M323.5 483.5 L331.5 478.8 L341.2 478.8 L343.6 482.6 Z" fill="#adadad" stroke-width="1.1"/>
<path d="M361.6 481.4 L364.6 478.8 L376.8 478.8 L382.9 483 Z" fill="#bcbcbc" stroke-width="1.1"/>
<path d="M326.8 489.8 L379.9 490.6 L376.4 493.6 L331.5 493.4 Z" fill="#dadada" stroke-width="1.1"/>
<path d="M323 483.2 L387.2 483 L387.2 487.4 L323 487.6 Z" fill="#bdbdbd"/>
<path d="M343.6 483.4 H351.6 V487.2 H343.6 Z M356.4 483.6 H365.8 V487 H356.4 Z" fill="#e8e8e8" stroke-width="1"/>
<path d="M352 488.4 L355.2 482.2 M353.6 488.4 L356.8 482.2" stroke-width="1"/>
<path d="M368.3 486.7 H386.6" stroke="#19c8f0" stroke-width="1"/>
<circle cx="377.4" cy="493.6" r="1.1" fill="#ddd" stroke-width="0.9"/>
</g>
</svg>
<!--P3D-END-->
<!--P2D-START-->
<svg id="svg2d" width="1360" height="738" viewBox="0 0 1360 738">
<g stroke-linejoin="round">
<!-- green handle -->
<path d="M949.5 340 V350" stroke="#000" stroke-width="1"/>
<!-- part outline -->
<path d="M951.3 350.3 L958.7 350.9 L989.3 381.4 L998.2 382.2 L1000.9 384.4 L1000.9 390.4 L1008.7 397.3 L1017.3 417.4 L1157.6 516.9 L1155.6 517.6 L1015.2 428.9 L1013.6 425.7 L984.1 405.7 L918.5 405 L888.6 423.7 L887.1 426.9 L743.4 512.5 L741.4 511 L885.4 415.3 L893.9 395.6 L902.5 389.6 L902.5 383.7 L905 381.4 L914 380.7 L944.6 350.9 Z M951.3 351.4 L967.7 365.8 L967.7 377 L964 381.4 L939.3 381.4 L935.6 377 L935.6 365.8 Z M891 415.6 L913.8 401.4 L914.8 404.2 L892.2 419 Z M988.2 402 L1010.8 416.4 L1010.6 420 L987 405 Z" fill="#fff" fill-rule="evenodd" stroke="#000" stroke-width="1.15"/>
<!-- inner lines -->
<path d="M914.7 402.2 V398.6 L925.9 393.4 H935.6 L943 398.6 H949 L951.3 397.2 L953.6 398.6 H959.5 L966.9 393.4 H976.6 L984.1 398.6 L987.8 399.3 V402.6" fill="none" stroke="#000" stroke-width="1.05"/>
<path d="M914.7 402.3 H949.2 L950.6 403.6 L952 402.3 H987.8" fill="none" stroke="#000" stroke-width="1.05"/>
<path d="M958 386.2 L950.5 398.6" fill="none" stroke="#000" stroke-width="1.15"/>
<circle cx="944.9" cy="385.9" r="1.5" fill="#c8c8c8" stroke="#000" stroke-width="1.05"/>
<circle cx="958.1" cy="385.8" r="1.4" fill="#c8c8c8" stroke="#000" stroke-width="1.05"/>
</g>
<!-- red bounding box -->
<rect x="740.5" y="349.5" width="418" height="169" fill="none" stroke="#f00" stroke-width="1" shape-rendering="crispEdges"/>
<circle cx="949.5" cy="339.5" r="3" fill="#00e800" stroke="#0a3a0a" stroke-width="1.05"/>
</svg>
<!--P2D-END-->
<div id="status" class="abs">
<span style="left:2px;transform:scaleX(0.9595)">2D [Select/Move] L [Pan] R or Wheel Drag [Zoom] Shift+R or Wheel</span>
<span style="left:976px;transform:scaleX(0.95)">H213mm W173mm D200mm / Parts 441</span>
<i style="position:absolute;left:1359px;top:2px;width:1px;height:16px;background:#d7d7d7"></i>
</div>
</body>
</html>
